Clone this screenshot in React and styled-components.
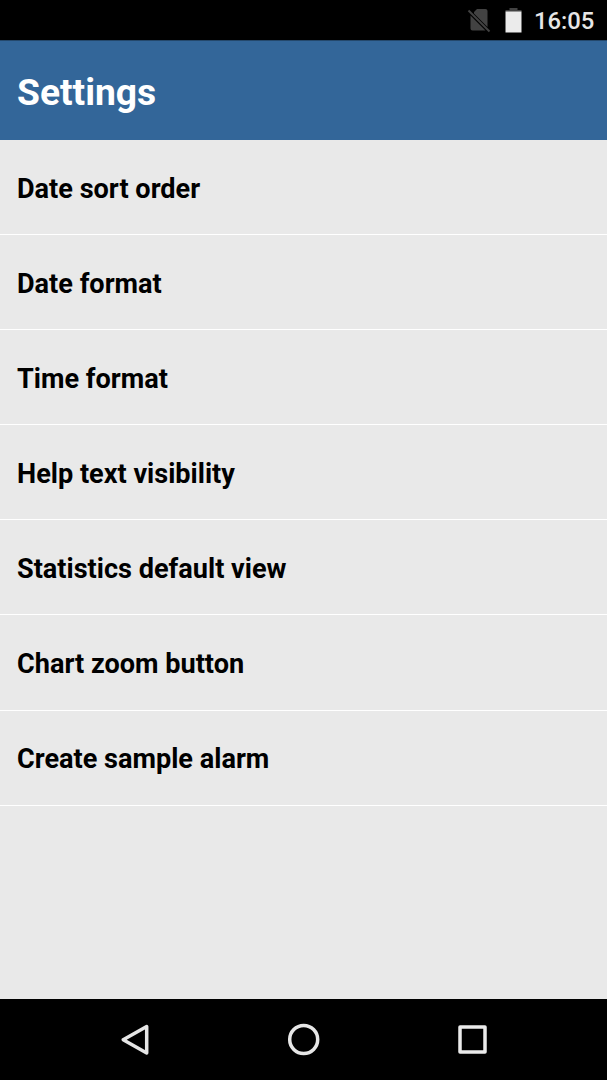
import React from "react";
import styled, { createGlobalStyle } from "styled-components";

const GlobalStyle = createGlobalStyle`
  * { box-sizing: border-box; }
  body { margin: 0; background: #e9e9e9; font-family: Roboto, "Liberation Sans", sans-serif; }
`;
const Screen = styled.div`
  display: flex;
  flex-direction: column;
  width: 100%;
  height: 1080px;
  overflow: hidden;
  background: #e9e9e9;
`;
const StatusBar = styled.header`
  display: flex;
  flex: none;
  justify-content: flex-end;
  align-items: center;
  height: 40px;
  padding: 0 13px 0 0;
  background: #000;
`;
const StatusIcon = styled.svg`
  display: block;
  flex: none;
  margin-right: ${(p) => p.$gap}px;
`;
const Clock = styled.time`
  width: 60px;
  padding-top: 2px;
  color: #e6e6e6;
  font-size: 23.8px;
  font-weight: 500;
  line-height: 28px;
  text-align: right;
`;
const TitleBar = styled.div`
  display: flex;
  flex: none;
  align-items: center;
  height: 100px;
  padding: 3px 17px 0;
  border-top: 1px solid #24486c;
  background: #336699;
`;
const Title = styled.h1`
  margin: 0;
  color: #fff;
  font-size: 37.2px;
  font-weight: 700;
  line-height: 44px;
`;
const List = styled.ul`
  flex: 1;
  margin: 0;
  padding: 0;
  list-style: none;
`;
const Row = styled.li`
  display: flex;
  align-items: center;
  height: 95.1px;
  padding: 3px 17px 0;
  border-bottom: 1px solid #fff;
  color: #000;
  font-size: 27.1px;
  font-weight: 700;
  line-height: 32px;
`;
const NavBar = styled.nav`
  display: grid;
  flex: none;
  grid-template-columns: repeat(3, 169px);
  justify-content: center;
  height: 81px;
  background: #000;
`;
const NavButton = styled.button`
  display: flex;
  align-items: center;
  justify-content: center;
  padding: 0;
  border: 0;
  background: none;
`;
const items = [
  "Date sort order", "Date format", "Time format", "Help text visibility",
  "Statistics default view", "Chart zoom button", "Create sample alarm",
];

export default function App() {
  return (
    <Screen>
      <GlobalStyle />
      <StatusBar>
        <StatusIcon $gap={14} width="24" height="26" viewBox="0 0 24 26">
          <path d="M10 2H18.5a2 2 0 0 1 2 2V20L7 6.5V5ZM3.5 8.5L18.5 23.5H5.5a2 2 0 0 1-2-2Z" fill="#424242" />
          <path d="M1.5 3.5L22.5 24.5" stroke="#424242" strokeWidth="2" />
        </StatusIcon>
        <StatusIcon $gap={12} width="17" height="26" viewBox="0 0 17 26">
          <path d="M4.5 1h8v2h4v2H.5V3h4Z" fill="#424242" />
          <path d="M.5 4.5h16v21H.5Z" fill="#ebebeb" />
        </StatusIcon>
        <Clock>16:05</Clock>
      </StatusBar>
      <TitleBar><Title>Settings</Title></TitleBar>
      <List>{items.map((item) => <Row key={item}>{item}</Row>)}</List>
      <NavBar>
        <NavButton aria-label="Back">
          <svg width="34" height="34" viewBox="0 0 34 34" fill="none" stroke="#e6e6e6" strokeWidth="3.5" strokeLinejoin="round"><path d="M28.7 3.5V30L5.2 16.7Z" /></svg>
        </NavButton>
        <NavButton aria-label="Home">
          <svg width="34" height="34" viewBox="0 0 34 34" fill="none" stroke="#e6e6e6" strokeWidth="3.5"><circle cx="16.7" cy="16.5" r="14" /></svg>
        </NavButton>
        <NavButton aria-label="Recent apps">
          <svg width="34" height="34" viewBox="0 0 34 34" fill="none" stroke="#ebebeb" strokeWidth="3.5" strokeLinejoin="round"><rect x="4" y="4" width="25" height="25" /></svg>
        </NavButton>
      </NavBar>
    </Screen>
  );
}
